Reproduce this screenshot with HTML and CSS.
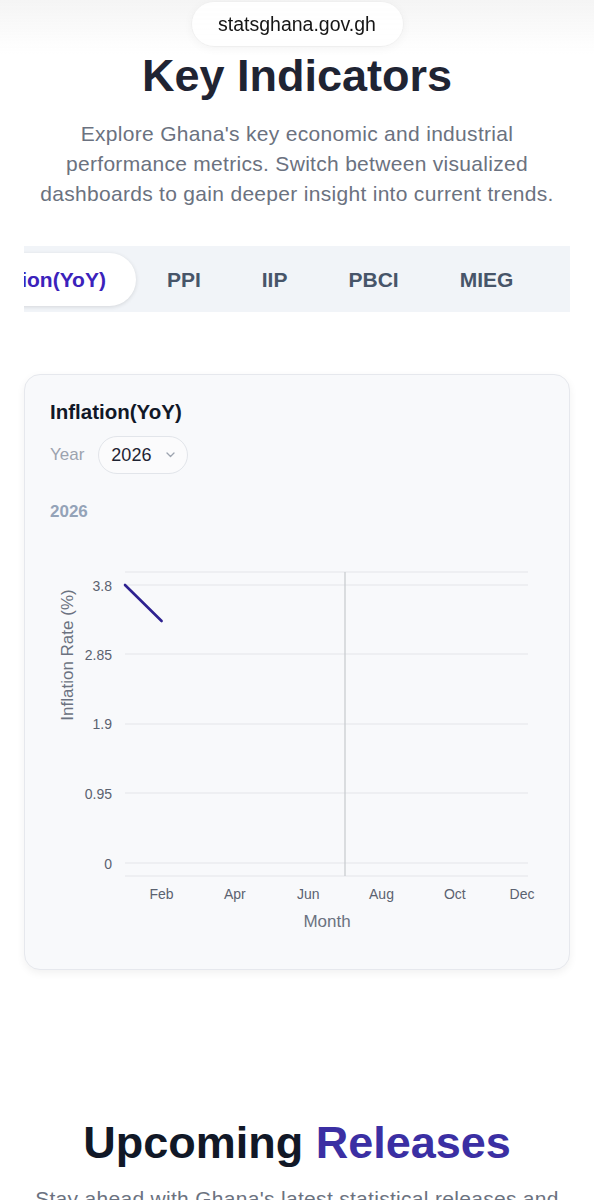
FILE: index.html
```html
<!DOCTYPE html>
<html lang="en">
  <head>
    <meta charset="UTF-8">
    <meta name="viewport" content="width=device-width, initial-scale=1.0">
    <title>Key Indicators - Ghana Statistical Service</title>
    <link rel="stylesheet" href="styles.css">
  </head>

  <body>

    <!-- Browser address pill floating over the page -->
    <div class="browser-bar">
      <div class="url-pill">statsghana.gov.gh</div>
    </div>

    <main>
      <section class="indicators">
        <h1 class="section-title">Key Indicators</h1>
        <p class="section-lead">Explore Ghana's key economic and industrial performance metrics. Switch between visualized dashboards to gain deeper insight into current trends.</p>

        <div class="tabs">
          <div class="tab-track">
            <button class="tab active">Inflation(YoY)</button>
            <button class="tab">PPI</button>
            <button class="tab">IIP</button>
            <button class="tab">PBCI</button>
            <button class="tab">MIEG</button>
          </div>
        </div>

        <div class="chart-card">
          <h3 class="chart-title">Inflation(YoY)</h3>

          <div class="year-row">
            <label for="year-select">Year</label>
            <div class="year-select" id="year-select">
              <span>2026</span>
              <svg width="9" height="6" viewBox="0 0 9 6"><path d="M1 1l3.5 3.5L8 1" fill="none" stroke="#9ca3af" stroke-width="1.3" stroke-linecap="round" stroke-linejoin="round"/></svg>
            </div>
          </div>

          <div class="chart-year">2026</div>

          <svg class="chart" width="494" height="405" viewBox="0 0 494 405">
            <!-- grid -->
            <g class="grid">
              <line x1="75" y1="42" x2="478" y2="42"/>
              <line x1="75" y1="55" x2="478" y2="55"/>
              <line x1="75" y1="124" x2="478" y2="124"/>
              <line x1="75" y1="194" x2="478" y2="194"/>
              <line x1="75" y1="263" x2="478" y2="263"/>
              <line x1="75" y1="333" x2="478" y2="333"/>
              <line x1="75" y1="346" x2="478" y2="346"/>
            </g>

            <!-- hover cursor on Jul -->
            <line class="cursor" x1="295" y1="42" x2="295" y2="346"/>

            <!-- data: Jan 3.8, Feb 3.31 -->
            <polyline class="series" points="75,55 111.6,91"/>

            <g class="tick y-tick">
              <text x="62" y="61">3.8</text>
              <text x="62" y="130">2.85</text>
              <text x="62" y="199">1.9</text>
              <text x="62" y="269">0.95</text>
              <text x="62" y="339">0</text>
            </g>

            <g class="tick x-tick">
              <text x="111.6" y="369">Feb</text>
              <text x="184.9" y="369">Apr</text>
              <text x="258.2" y="369">Jun</text>
              <text x="331.5" y="369">Aug</text>
              <text x="404.8" y="369">Oct</text>
              <text x="472" y="369">Dec</text>
            </g>

            <text class="axis-title" x="277" y="397">Month</text>
            <text class="axis-title" x="17" y="125" transform="rotate(-90 17 125)" dominant-baseline="central">Inflation Rate (%)</text>
          </svg>
        </div>
      </section>

      <section class="releases">
        <h2 class="section-title">Upcoming <span class="accent">Releases</span></h2>
        <p class="section-lead">Stay ahead with Ghana's latest statistical releases and plan around upcoming publication dates.</p>
      </section>
    </main>

  </body>
</html>
```

FILE: styles.css
```css
* { box-sizing: border-box; }

body {
	margin: 0;
	background-color: #ffffff;
	font-family: 'Liberation Sans', Arial, sans-serif;
	color: #1f2433;
}

/* Safari style address bar sitting over the content */
.browser-bar {
	position: fixed;
	top: 0;
	left: 0;
	right: 0;
	height: 54px;
	background: linear-gradient(to bottom, rgba(240, 240, 240, 0.7), rgba(255, 255, 255, 0));
	pointer-events: none;
}

.url-pill {
	width: 213px;
	height: 46px;
	margin: 1px auto 0;
	display: flex;
	align-items: center;
	justify-content: center;
	border: 1px solid #efefef;
	border-radius: 23px;
	background-color: rgba(255, 255, 255, 0.94);
	box-shadow: 0 2px 10px rgba(0, 0, 0, 0.04);
	font-size: 19.5px;
	color: #161616;
}

/* Shared section headings */
.section-title {
	margin: 0;
	font-size: 45px;
	line-height: 54px;
	font-weight: 700;
	text-align: center;
	color: #1f2433;
}

.section-lead {
	max-width: 524px;
	margin: 16px auto 0;
	font-size: 21px;
	line-height: 30px;
	letter-spacing: 0.3px;
	text-align: center;
	color: #6b7280;
}

.indicators {
	padding: 49px 0 82px;
}

/* Tabs */
.tabs {
	margin: 37px 24px 0;
	padding: 7px 0 6px;
	background-color: #f1f4f8;
	overflow: hidden;
}

.tab-track {
	display: flex;
	gap: 1px;
	margin-left: -83px; /* scrolled so the active tab hugs the left edge */
}

.tab {
	flex: none;
	padding: 14px 30px;
	border: none;
	border-radius: 999px;
	background: none;
	font-family: inherit;
	font-size: 21px;
	line-height: 25px;
	font-weight: 700;
	color: #475569;
}

.tab.active {
	background-color: #ffffff;
	color: #3b22bb;
	box-shadow: 0 1px 4px rgba(0, 0, 0, 0.12);
}

/* Chart card */
.chart-card {
	margin: 62px 24px 0;
	padding: 25px 25px 34px;
	border: 1px solid #e6e8ed;
	border-radius: 16px;
	background-color: #f8f9fb;
	box-shadow: 0 3px 8px rgba(0, 0, 0, 0.06);
}

.chart-title {
	margin: 0;
	font-size: 20.5px;
	line-height: 24px;
	font-weight: 700;
	color: #111827;
}

.year-row {
	display: flex;
	align-items: center;
	gap: 14px;
	margin-top: 12px;
}

.year-row label {
	font-size: 17px;
	color: #9ca3af;
}

.year-select {
	display: flex;
	align-items: center;
	gap: 15px;
	height: 38px;
	padding: 0 12px;
	border: 1px solid #e2e5ea;
	border-radius: 19px;
	background-color: #fbfbfc;
	font-size: 18px;
	color: #1f2433;
}

.chart-year {
	margin-top: 28px;
	font-size: 17px;
	line-height: 20px;
	font-weight: 700;
	color: #94a3b8;
}

.chart {
	display: block;
	margin-top: 8px;
	font-family: 'Liberation Sans', Arial, sans-serif;
}

.chart .grid line {
	stroke: #e3e5e9;
	stroke-width: 1.2;
}

.chart .cursor {
	stroke: #c7c9cd;
	stroke-width: 1.2;
}

.chart .series {
	fill: none;
	stroke: #2e2290;
	stroke-width: 2.6;
	stroke-linecap: round;
}

.chart .tick text {
	font-size: 14px;
	fill: #5b6270;
}

.chart .y-tick text { text-anchor: end; }
.chart .x-tick text { text-anchor: middle; }

.chart .axis-title {
	font-size: 17px;
	fill: #6b7280;
	text-anchor: middle;
}

/* Releases */
.releases {
	padding: 64px 0 40px;
}

.releases .section-title { color: #111827; }

.releases .section-title .accent { color: #3b2fa3; }

.releases .section-lead { margin-top: 14px; }
```
